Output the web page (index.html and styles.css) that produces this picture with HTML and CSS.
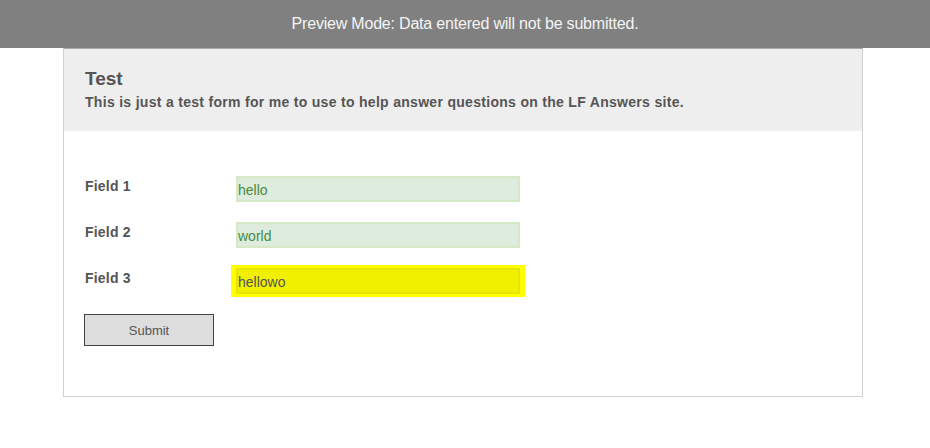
FILE: index.html
```html
<!DOCTYPE html>
<html lang="en">
<head>
    <meta charset="UTF-8">
    <meta name="viewport" content="width=device-width, initial-scale=1.0">
    <title>Test</title>
    <link rel="stylesheet" href="styles.css">
</head>
<body>
    <div class="preview-bar">Preview Mode: Data entered will not be submitted.</div>

    <div class="form-card">
        <div class="form-header">
            <h1>Test</h1>
            <p>This is just a test form for me to use to help answer questions on the LF Answers site.</p>
        </div>
        <form class="form-body">
            <div class="field-row">
                <label for="field1">Field 1</label>
                <input id="field1" type="text" class="valid" value="hello">
            </div>
            <div class="field-row">
                <label for="field2">Field 2</label>
                <input id="field2" type="text" class="valid" value="world">
            </div>
            <div class="field-row">
                <label for="field3">Field 3</label>
                <input id="field3" type="text" class="active" value="hellowo">
            </div>
            <button type="button" id="submit-btn">Submit</button>
        </form>
    </div>
</body>
</html>
```

FILE: styles.css
```css
body {
    font-family: 'Liberation Sans', Arial, sans-serif;
    background-color: #ffffff;
    margin: 0;
    padding: 0;
    color: #555555;
}

.preview-bar {
    height: 48px;
    line-height: 48px;
    background-color: #808080;
    color: #f4f4f4;
    font-size: 16px;
    letter-spacing: -0.2px;
    text-align: center;
}

.form-card {
    width: 798px;
    margin: 0 0 0 63px;
    border: 1px solid #d0d0d0;
    border-top-color: #a8a8a8;
    background-color: #ffffff;
}

.form-header {
    background-color: #eeeeee;
    padding: 19px 21px 20px;
}

h1 {
    font-size: 19px;
    line-height: 22px;
    margin: 0 0 4px;
    color: #555555;
}

.form-header p {
    font-size: 14px;
    line-height: 17px;
    font-weight: bold;
    letter-spacing: 0.3px;
    margin: 0;
    color: #555555;
}

.form-body {
    display: flex;
    flex-direction: column;
    align-items: flex-start;
    gap: 20px;
    padding: 45px 21px 50px;
}

.field-row {
    display: flex;
    align-items: flex-start;
}

label {
    width: 151px;
    margin-top: 2px;
    font-size: 14px;
    line-height: 17px;
    font-weight: bold;
    letter-spacing: 0.2px;
    color: #555555;
}

input {
    box-sizing: border-box;
    width: 284px;
    height: 26px;
    padding: 2px 0 0;
    border: 2px solid #d6e9c6;
    font-family: inherit;
    font-size: 14px;
    outline: none;
}

input.valid {
    background-color: #ddecdd;
    color: #4a8a40;
}

input.active {
    background-color: #f0f000;
    border-color: #e6e600;
    color: #555555;
    box-shadow: -2px 0 0 3px #ffff00, 2px 0 0 3px #ffff00;
}

#submit-btn {
    width: 130px;
    height: 32px;
    margin-left: -1px;
    background-color: #dddddd;
    border: 1px solid #444444;
    color: #555555;
    font-family: inherit;
    font-size: 13px;
    cursor: pointer;
}
```
